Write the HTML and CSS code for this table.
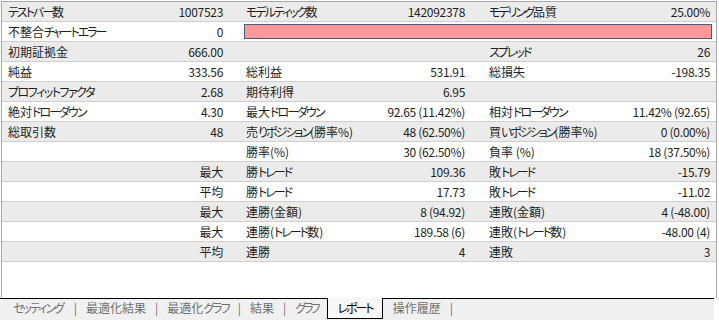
FILE: index.html
```html
<!DOCTYPE html>
<html lang="ja">
<head>
<meta charset="utf-8">
<link rel="stylesheet" href="styles.css">
</head>
<body>
<div class="window">
  <div class="panel">
    <div class="row gray">
      <span class="l"><span class="kn">テストバー</span>数</span><span class="v">1007523</span>
      <span class="l c2"><span class="kn">モデルティック</span>数</span><span class="v">142092378</span>
      <span class="l c3"><span class="kn">モデリング</span>品質</span><span class="v last">25.00%</span>
    </div>
    <div class="row">
      <span class="l">不整合<span class="kn">チャートエラー</span></span><span class="v">0</span>
      <span class="bar-cell"><span class="quality-bar"></span></span>
    </div>
    <div class="row gray">
      <span class="l">初期証拠金</span><span class="v">666.00</span>
      <span class="l c2"></span><span class="v"></span>
      <span class="l c3"><span class="kn">スプレッド</span></span><span class="v last">26</span>
    </div>
    <div class="row">
      <span class="l">純益</span><span class="v">333.56</span>
      <span class="l c2">総利益</span><span class="v">531.91</span>
      <span class="l c3">総損失</span><span class="v last">-198.35</span>
    </div>
    <div class="row gray">
      <span class="l"><span class="kn wide">プロフィットファクタ</span></span><span class="v">2.68</span>
      <span class="l c2">期待利得</span><span class="v">6.95</span>
      <span class="l c3"></span><span class="v last"></span>
    </div>
    <div class="row">
      <span class="l">絶対<span class="kn">ドローダウン</span></span><span class="v">4.30</span>
      <span class="l c2">最大<span class="kn">ドローダウン</span></span><span class="v">92.65 (11.42%)</span>
      <span class="l c3">相対<span class="kn">ドローダウン</span></span><span class="v last">11.42% (92.65)</span>
    </div>
    <div class="row gray">
      <span class="l">総取引数</span><span class="v">48</span>
      <span class="l c2">売<span class="kn">りポジション</span>(勝率%)</span><span class="v">48 (62.50%)</span>
      <span class="l c3">買<span class="kn">いポジション</span>(勝率%)</span><span class="v last">0 (0.00%)</span>
    </div>
    <div class="row">
      <span class="l"></span><span class="v"></span>
      <span class="l c2">勝率(%)</span><span class="v">30 (62.50%)</span>
      <span class="l c3">負率 (%)</span><span class="v last">18 (37.50%)</span>
    </div>
    <div class="row gray">
      <span class="l"></span><span class="v">最大</span>
      <span class="l c2">勝<span class="kn">トレード</span></span><span class="v">109.36</span>
      <span class="l c3">敗<span class="kn">トレード</span></span><span class="v last">-15.79</span>
    </div>
    <div class="row">
      <span class="l"></span><span class="v">平均</span>
      <span class="l c2">勝<span class="kn">トレード</span></span><span class="v">17.73</span>
      <span class="l c3">敗<span class="kn">トレード</span></span><span class="v last">-11.02</span>
    </div>
    <div class="row gray">
      <span class="l"></span><span class="v">最大</span>
      <span class="l c2">連勝(金額)</span><span class="v">8 (94.92)</span>
      <span class="l c3">連敗(金額)</span><span class="v last">4 (-48.00)</span>
    </div>
    <div class="row">
      <span class="l"></span><span class="v">最大</span>
      <span class="l c2">連勝(<span class="kn">トレード</span>数)</span><span class="v">189.58 (6)</span>
      <span class="l c3">連敗(<span class="kn">トレード</span>数)</span><span class="v last">-48.00 (4)</span>
    </div>
    <div class="row gray">
      <span class="l"></span><span class="v">平均</span>
      <span class="l c2">連勝</span><span class="v">4</span>
      <span class="l c3">連敗</span><span class="v last">3</span>
    </div>
  </div>
  <div class="tabs">
    <span class="tab kn">セッティング</span><span class="sep first">|</span>
    <span class="tab">最適化結果</span><span class="sep">|</span>
    <span class="tab">最適化<span class="kn">グラフ</span></span><span class="sep">|</span>
    <span class="tab">結果</span><span class="sep">|</span>
    <span class="tab kn narrow">グラフ</span>
    <span class="tab active"><span class="kn">レポート</span></span>
    <span class="tab">操作履歴</span><span class="sep">|</span>
  </div>
</div>
</body>
</html>
```
FILE: styles.css
```css
* { box-sizing: border-box; }
html, body { margin: 0; padding: 0; background: #ffffff; }
body {
  font-family: "Noto Sans CJK JP", "Noto Sans", sans-serif;
  font-size: 12px;
  color: #1e1e1e;
  font-feature-settings: "palt";
}
.kn { letter-spacing: -2px; }
.kn.wide { letter-spacing: -1.5px; }
.kn.narrow { letter-spacing: -3px; }
.window {
  width: 719px;
  height: 320px;
  padding-top: 1px;
  display: flex;
  flex-direction: column;
  overflow: hidden;
}
.panel {
  margin-left: 1px;
  width: 716px;
  flex: 1;
  border-top: 1px solid #a8a8a8;
  border-left: 1px solid #a8a8a8;
  border-right: 1px solid #a8a8a8;
  background: #ffffff;
}
.row {
  display: grid;
  grid-template-columns: 128px 110px 120px 122px 120px 114px;
  height: 20px;
  border-bottom: 1px solid #cfcfcf;
  background: #ffffff;
  align-items: center;
  line-height: 19px;
  white-space: nowrap;
}
.row.gray { background: #ebebeb; }
.l { padding-left: 6px; }
.l.c2 { padding-left: 6px; }
.l.c3 { padding-left: 7px; }
.v { text-align: right; padding-right: 17px; letter-spacing: -0.3px; }
.v.last { padding-right: 6px; }
.bar-cell {
  grid-column: 3 / 7;
  align-self: stretch;
  padding: 2px 4px 2px 4px;
  display: flex;
}
.quality-bar {
  flex: 1;
  background: #ff9999;
  border: 1px solid #4b5a76;
}
.tabs {
  height: 22px;
  width: 714px;
  border-top: 1px solid #000000;
  background: #f0f0f0;
  display: flex;
  align-items: flex-start;
  padding-left: 13px;
  color: #707070;
  line-height: 18px;
  white-space: nowrap;
}
.sep { padding: 0 9px; }
.sep.first { padding-left: 11px; }
.tab.active {
  margin-top: -1px;
  height: 21px;
  background: #f7f7f7;
  border: 1px solid #000000;
  border-top: none;
  color: #000000;
  padding: 1px 9px 0 9px;
  margin-left: 10px;
  margin-right: 10px;
}
```
